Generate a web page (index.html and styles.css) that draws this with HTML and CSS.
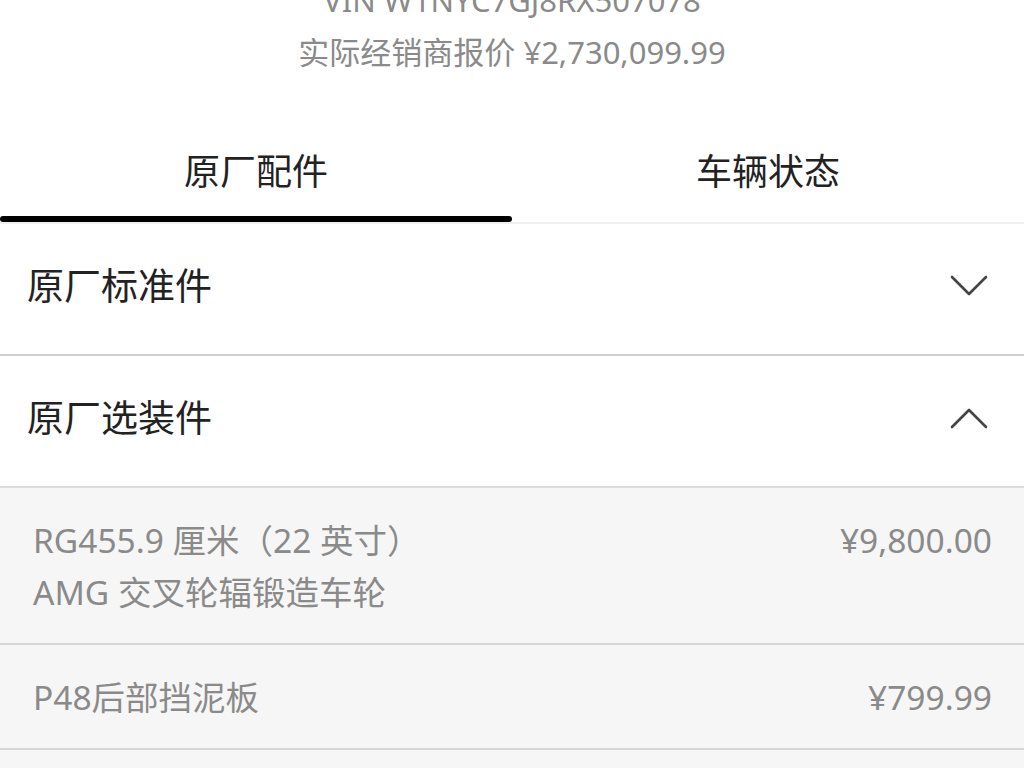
FILE: index.html
```html
<!DOCTYPE html>
<html lang="zh-CN">
<head>
    <meta charset="UTF-8">
    <meta name="viewport" content="width=device-width, initial-scale=1.0">
    <title>原厂配件</title>
    <link rel="stylesheet" href="styles.css">
</head>
<body>
    <!-- Vehicle summary -->
    <div class="summary">
        <div class="summary-line">VIN W1NYC7GJ8RX507078</div>
        <div class="summary-line">实际经销商报价 ¥2,730,099.99</div>
    </div>

    <!-- Tabs -->
    <div class="tabs">
        <div class="tab active">原厂配件</div>
        <div class="tab">车辆状态</div>
    </div>

    <!-- Standard parts -->
    <div class="section">
        <div class="section-header">
            <span class="section-title">原厂标准件</span>
            <svg class="chevron" width="38" height="22" viewBox="0 0 38 22" fill="none" stroke="currentColor" stroke-width="2.6" stroke-linecap="round" stroke-linejoin="round">
                <path d="M2 2l17 17L36 2"/>
            </svg>
        </div>
    </div>

    <!-- Optional parts -->
    <div class="section open">
        <div class="section-header">
            <span class="section-title">原厂选装件</span>
            <svg class="chevron" width="38" height="22" viewBox="0 0 38 22" fill="none" stroke="currentColor" stroke-width="2.6" stroke-linecap="round" stroke-linejoin="round">
                <path d="M2 20L19 3l17 17"/>
            </svg>
        </div>
        <div class="part-list">
            <div class="part">
                <div class="part-name">RG455.9 厘米（22 英寸）<br>AMG 交叉轮辐锻造车轮</div>
                <div class="part-price">¥9,800.00</div>
            </div>
            <div class="part">
                <div class="part-name">P48后部挡泥板</div>
                <div class="part-price">¥799.99</div>
            </div>
            <div class="part"></div>
        </div>
    </div>
</body>
</html>
```

FILE: styles.css
```css
* {
    margin: 0;
    padding: 0;
    box-sizing: border-box;
    font-family: 'Noto Sans', 'Noto Sans CJK SC', sans-serif;
}

html, body {
    height: 100%;
    overflow: hidden;
}

body {
    background-color: #fff;
    color: #222;
}

/* Summary at top (scrolled, first line clipped) */
.summary {
    margin-top: -26px;
    text-align: center;
    color: #8a8a8a;
    font-size: 31px;
}

.summary-line {
    line-height: 52px;
}

/* Tabs */
.tabs {
    display: flex;
    border-bottom: 2px solid #f0f0f0;
}

.tab {
    flex: 1;
    text-align: center;
    font-size: 36px;
    line-height: 48px;
    padding-top: 70px;
    color: #222;
}

.tab::after {
    content: "";
    display: block;
    height: 6px;
    margin-top: 20px;
    border-radius: 3px;
    background-color: transparent;
}

.tab.active::after {
    background-color: #000;
}

/* Collapsible sections */
.section-header {
    display: flex;
    align-items: center;
    justify-content: space-between;
    padding: 37px 36px 43px 27px;
    border-bottom: 2px solid #cfcfcf;
}

.section.open .section-header {
    border-bottom-color: #dcdcdc;
}

.section-title {
    font-size: 37px;
    line-height: 50px;
    color: #222;
}

.chevron {
    color: #444;
}

/* Parts list */
.part-list {
    background-color: #f6f6f6;
}

.part {
    display: flex;
    justify-content: space-between;
    align-items: flex-start;
    padding: 26px 32px 25px 33px;
    border-bottom: 2px solid #d6d6d6;
    color: #8a8a8a;
    font-size: 33.5px;
    line-height: 52px;
}

.part:last-child {
    border-bottom: none;
    height: 60px;
}
```
